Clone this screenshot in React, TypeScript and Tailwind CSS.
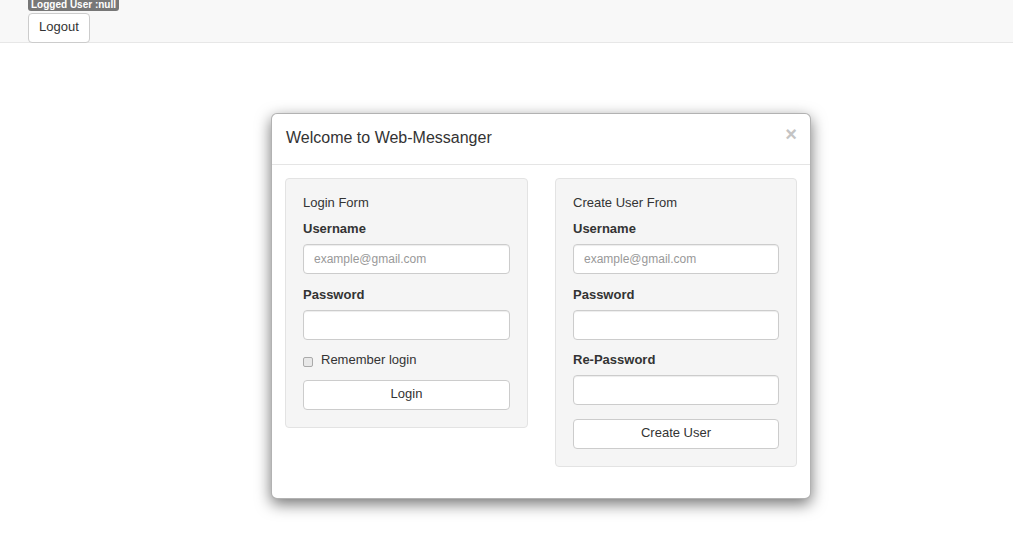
import React from "react";

const font = { fontFamily: '"Liberation Sans", Arial, sans-serif' };

function Field({ label, placeholder, mt }: { label: string; placeholder?: string; mt: string }) {
  return (
    <div className={mt}>
      <div className="text-[13px] leading-[20px] font-bold text-[#333]">{label}</div>
      <input
        className="mt-[5px] block w-full h-[30px] rounded-[4px] border border-[#ccc] bg-white px-[10px] text-[12px] text-[#555] placeholder:text-[#999] outline-none shadow-[inset_0_1px_1px_rgba(0,0,0,0.075)]"
        placeholder={placeholder}
        style={font}
      />
    </div>
  );
}

export default function App() {
  return (
    <div className="min-h-[536px] w-[1013px] bg-white text-[#333]" style={font}>
      <div className="h-[43px] bg-[#f8f8f8] border-b border-[#e7e7e7] pl-[28px]">
        <div className="w-fit bg-[#777] text-white text-[10px] font-bold leading-[11px] h-[11px] px-[3px] rounded-b-[3px] overflow-hidden">
          <div className="relative top-[-1px]">Logged User :null</div>
        </div>
        <button
          className="block mt-[2px] h-[30px] w-[62px] rounded-[4px] border border-[#ccc] bg-white text-[13px] text-[#333] pb-[2px]"
          style={font}
        >
          Logout
        </button>
      </div>

      <div className="pl-[271px] pt-[70px]">
        <div className="w-[540px] bg-white border border-[rgba(0,0,0,0.3)] rounded-[6px] shadow-[0_5px_15px_rgba(0,0,0,0.55)]">
          <div className="h-[51px] border-b border-[#e5e5e5] flex items-center justify-between pl-[14px] pr-[13px]">
            <div className="text-[16px] text-[#333] leading-[20px] mt-[-3px]">Welcome to Web-Messanger</div>
            <div className="text-[20px] font-bold text-[#c4c4c4] leading-[20px] mt-[-11px]">×</div>
          </div>
          <div className="flex items-start gap-[27px] pl-[13px] pt-[13px] pb-[31px]">
            <div className="w-[243px] bg-[#f5f5f5] border border-[#e3e3e3] rounded-[4px] px-[17px] pt-[14px] pb-[17px]">
              <div className="text-[13px] leading-[20px] text-[#333]">Login Form</div>
              <Field label="Username" placeholder="example@gmail.com" mt="mt-[6px]" />
              <Field label="Password" mt="mt-[11px]" />
              <div className="mt-[10px] flex items-center h-[20px]">
                <span className="inline-block w-[10px] h-[10px] mt-[3px] rounded-[2px] border border-[#aaa] bg-[#e8e8e8]" />
                <span className="ml-[8px] text-[13px] text-[#333]">Remember login</span>
              </div>
              <button
                className="mt-[10px] block w-full h-[30px] rounded-[4px] border border-[#ccc] bg-white text-[13px] text-[#333] pb-[2px]"
                style={font}
              >
                Login
              </button>
            </div>
            <div className="w-[242px] bg-[#f5f5f5] border border-[#e3e3e3] rounded-[4px] px-[17px] pt-[14px] pb-[17px]">
              <div className="text-[13px] leading-[20px] text-[#333]">Create User From</div>
              <Field label="Username" placeholder="example@gmail.com" mt="mt-[6px]" />
              <Field label="Password" mt="mt-[11px]" />
              <Field label="Re-Password" mt="mt-[10px]" />
              <button
                className="mt-[14px] block w-full h-[30px] rounded-[4px] border border-[#ccc] bg-white text-[13px] text-[#333] pb-[3px]"
                style={font}
              >
                Create User
              </button>
            </div>
          </div>
        </div>
      </div>
    </div>
  );
}
